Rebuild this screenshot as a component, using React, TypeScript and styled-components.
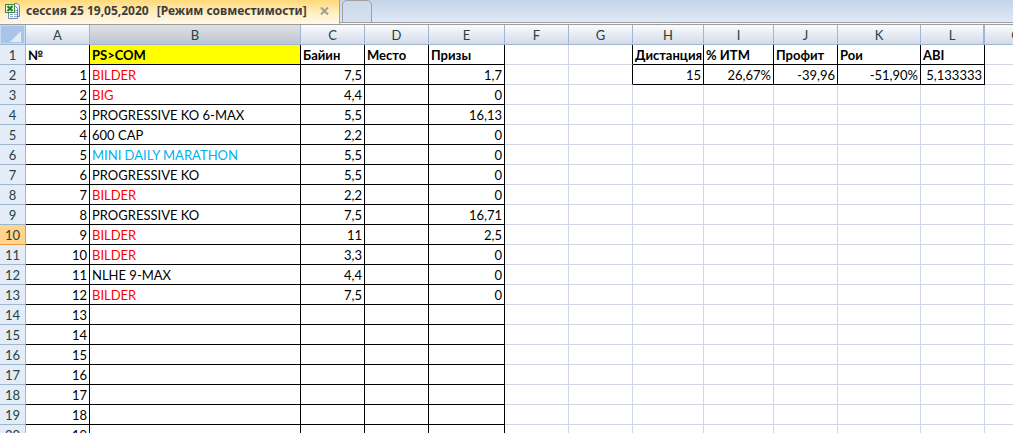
import React from 'react';
import styled, { createGlobalStyle, css } from 'styled-components';

const GlobalStyle = createGlobalStyle`
  * { box-sizing: border-box; }
  body { margin: 0; background: #fff; overflow: hidden; }
`;

const Window = styled.main`
  height: 100vh;
  overflow: hidden;
  font-family: Lato, 'Open Sans', sans-serif;
  font-size: 13px;
  color: #000;
`;

const TabBar = styled.nav`
  display: flex;
  align-items: flex-start;
  height: 25px;
  background: linear-gradient(#c3d4ea, #dfe9f6 22px, #a0a0a0 22px, #a0a0a0 23px, #fff8e8 23px, #fff8e8 24px, #9c9c9c 24px);
`;

const ActiveTab = styled.div`
  display: flex;
  align-items: center;
  flex: none;
  width: 340px;
  height: 24px;
  padding: 0 10px 2px 5px;
  border-right: 1px solid #a0a0a0;
  background: linear-gradient(#ffd978, #fff0c8 14px, #fff8e8);
`;

const TabTitle = styled.span`
  display: flex;
  flex: 1;
  gap: 8px;
  margin-left: 5px;
  font: bold 12px/22px 'Noto Sans', sans-serif;
  color: #3c3c3c;
  white-space: nowrap;
`;

const CloseButton = styled.button`
  display: flex;
  padding: 0;
  border: 0;
  background: none;
`;

const NewTab = styled.button`
  width: 30px;
  height: 23px;
  margin-left: 2px;
  border: 1px solid #a0a0a0;
  border-radius: 5px 5px 0 0;
  background: linear-gradient(#cbd9ea, #d6e1ee);
`;

const Sheet = styled.table`
  width: 100%;
  min-width: 1049px;
  border-collapse: separate;
  border-spacing: 0;
  table-layout: fixed;
`;

const headCell = css`
  height: 20px;
  padding: 1px 0 0;
  overflow: hidden;
  font-weight: normal;
  font-size: 13px;
  line-height: 18px;
  text-align: center;
  color: #27413e;
`;

const ColumnHead = styled.th<{ $active?: boolean; $thick?: boolean }>`
  ${headCell}
  border-right: ${p => (p.$thick ? 2 : 1)}px solid #9eb6ce;
  border-bottom: 1px solid #9eb6ce;
  background: ${p => (p.$active ? 'linear-gradient(#dfe2e4, #bcc5d2)' : 'linear-gradient(#f9fcfd, #d3dbe9)')};
`;

const RowHead = styled.th<{ $active?: boolean }>`
  ${headCell}
  border-right: 1px solid ${p => (p.$active ? '#f29536' : '#9eb6ce')};
  border-bottom: 1px solid ${p => (p.$active ? '#f29536' : '#9eb6ce')};
  background: ${p => (p.$active ? '#ffd58d' : '#e4ecf7')};
`;

const Corner = styled.th`
  ${headCell}
  padding: 0;
  border-right: 1px solid #9eb6ce;
  border-bottom: 1px solid #9eb6ce;
  background: #a9c4e9;
  box-shadow: inset 0 0 0 1px #c9dbf3;
`;

const CornerMark = styled.svg`
  display: block;
  margin-left: auto;
`;

type CellStyle = { $boxed?: boolean; $edge?: boolean; $head?: boolean; $left?: boolean; $tone?: string };

const Cell = styled.td<CellStyle>`
  height: 20px;
  padding: 1px 2px 0;
  overflow: hidden;
  line-height: 18px;
  white-space: nowrap;
  border-right: 1px solid ${p => (p.$boxed || p.$edge ? '#000' : '#d0d7e5')};
  border-bottom: 1px solid ${p => (p.$boxed ? '#000' : '#d0d7e5')};
  font-weight: ${p => (p.$head ? 'bold' : 'normal')};
  text-align: ${p => (p.$head || p.$left ? 'left' : 'right')};
  color: ${p => p.$tone || '#000'};
  background: ${p => (p.$head && p.$left ? '#ff0' : '#fff')};
`;

const columns = [
  { name: 'A', width: 64 },
  { name: 'B', width: 211 },
  { name: 'C', width: 64 },
  { name: 'D', width: 64 },
  { name: 'E', width: 76 },
  { name: 'F', width: 64 },
  { name: 'G', width: 64 },
  { name: 'H', width: 71 },
  { name: 'I', width: 70 },
  { name: 'J', width: 64 },
  { name: 'K', width: 83 },
  { name: 'L', width: 64 },
  { name: 'O', width: 64 },
];

const tournaments = [
  ['BILDER', '7,5', '1,7'],
  ['BIG', '4,4', '0'],
  ['PROGRESSIVE KO 6-MAX', '5,5', '16,13'],
  ['600 CAP', '2,2', '0'],
  ['MINI DAILY MARATHON', '5,5', '0'],
  ['PROGRESSIVE KO', '5,5', '0'],
  ['BILDER', '2,2', '0'],
  ['PROGRESSIVE KO', '7,5', '16,71'],
  ['BILDER', '11', '2,5'],
  ['BILDER', '3,3', '0'],
  ['NLHE 9-MAX', '4,4', '0'],
  ['BILDER', '7,5', '0'],
];

const tones: Record<string, string> = {
  BILDER: '#ff0000',
  BIG: '#ff0000',
  'MINI DAILY MARATHON': '#00b0f0',
};

const titles = ['№', 'PS>COM', 'Байин', 'Место', 'Призы'];
const statTitles = ['Дистанция', '% ИТМ', 'Профит', 'Рои', 'ABI'];
const statValues = ['15', '26,67%', '-39,96', '-51,90%', '5,133333'];
const rowCount = 20;
const activeRow = 10;

function cellText(row: number, col: number): string {
  if (col >= 7 && col < 12) {
    if (row === 1) return statTitles[col - 7];
    if (row === 2) return statValues[col - 7];
    return '';
  }
  if (col > 4) return '';
  if (row === 1) return titles[col];
  if (col === 0) return String(row - 1);
  const entry = tournaments[row - 2];
  if (!entry || col === 3) return '';
  return col === 1 ? entry[0] : col === 2 ? entry[1] : entry[2];
}

function ExcelIcon() {
  return (
    <svg width="16" height="16" viewBox="0 0 16 16" aria-hidden="true">
      <path d="M9.500 .5h3l2 2v11h-5z" fill="#e4ecf8" stroke="#6d8cba" />
      <path d="M3.500 6.500v9h9v-10l-2-2h-2z" fill="#fff" stroke="#6d8cba" />
      <path d="M5 11.500h3M9 11.500h3M5 13.500h3M9 13.500h3M10 7.500h2M10 9.500h2" stroke="#8fa9d2" />
      <rect x=".5" y="1.500" width="9" height="8" fill="#eef7e8" stroke="#3f8a3c" />
      <path d="M2.500 3l5 5M7.500 3l-5 5" stroke="#237a28" strokeWidth="2" />
    </svg>
  );
}

export default function App() {
  return (
    <Window>
      <GlobalStyle />
      <TabBar>
        <ActiveTab>
          <ExcelIcon />
          <TabTitle>
            <span>сессия 25 19,05,2020</span>
            <span>[Режим совместимости]</span>
          </TabTitle>
          <CloseButton aria-label="Закрыть">
            <svg width="9" height="8" viewBox="0 0 9 8">
              <path d="M1 .5l7 7M8 .5l-7 7" stroke="#a09c94" strokeWidth="2" />
            </svg>
          </CloseButton>
        </ActiveTab>
        <NewTab aria-label="Новая вкладка" />
      </TabBar>
      <Sheet>
        <colgroup>
          <col style={{ width: 26 }} />
          {columns.map(c => (
            <col key={c.name} style={c.name === 'O' ? undefined : { width: c.width }} />
          ))}
        </colgroup>
        <thead>
          <tr>
            <Corner>
              <CornerMark width="16" height="16" viewBox="0 0 16 16" aria-hidden="true">
                <path d="M12 4v11H1z" fill="#e4ebf5" />
              </CornerMark>
            </Corner>
            {columns.map(c => (
              <ColumnHead key={c.name} scope="col" $active={c.name === 'B'} $thick={c.name === 'L'}>
                {c.name}
              </ColumnHead>
            ))}
          </tr>
        </thead>
        <tbody>
          {Array.from({ length: rowCount }, (_, i) => i + 1).map(row => (
            <tr key={row}>
              <RowHead scope="row" $active={row === activeRow}>
                {row}
              </RowHead>
              {columns.map((c, col) => {
                const text = cellText(row, col);
                const stats = col >= 7 && col < 12 && row < 3;
                return (
                  <Cell
                    key={c.name}
                    $boxed={col < 5 || stats}
                    $edge={col === 6 && row < 3}
                    $head={row === 1}
                    $left={col === 1}
                    $tone={tones[text]}
                  >
                    {text}
                  </Cell>
                );
              })}
            </tr>
          ))}
        </tbody>
      </Sheet>
    </Window>
  );
}
